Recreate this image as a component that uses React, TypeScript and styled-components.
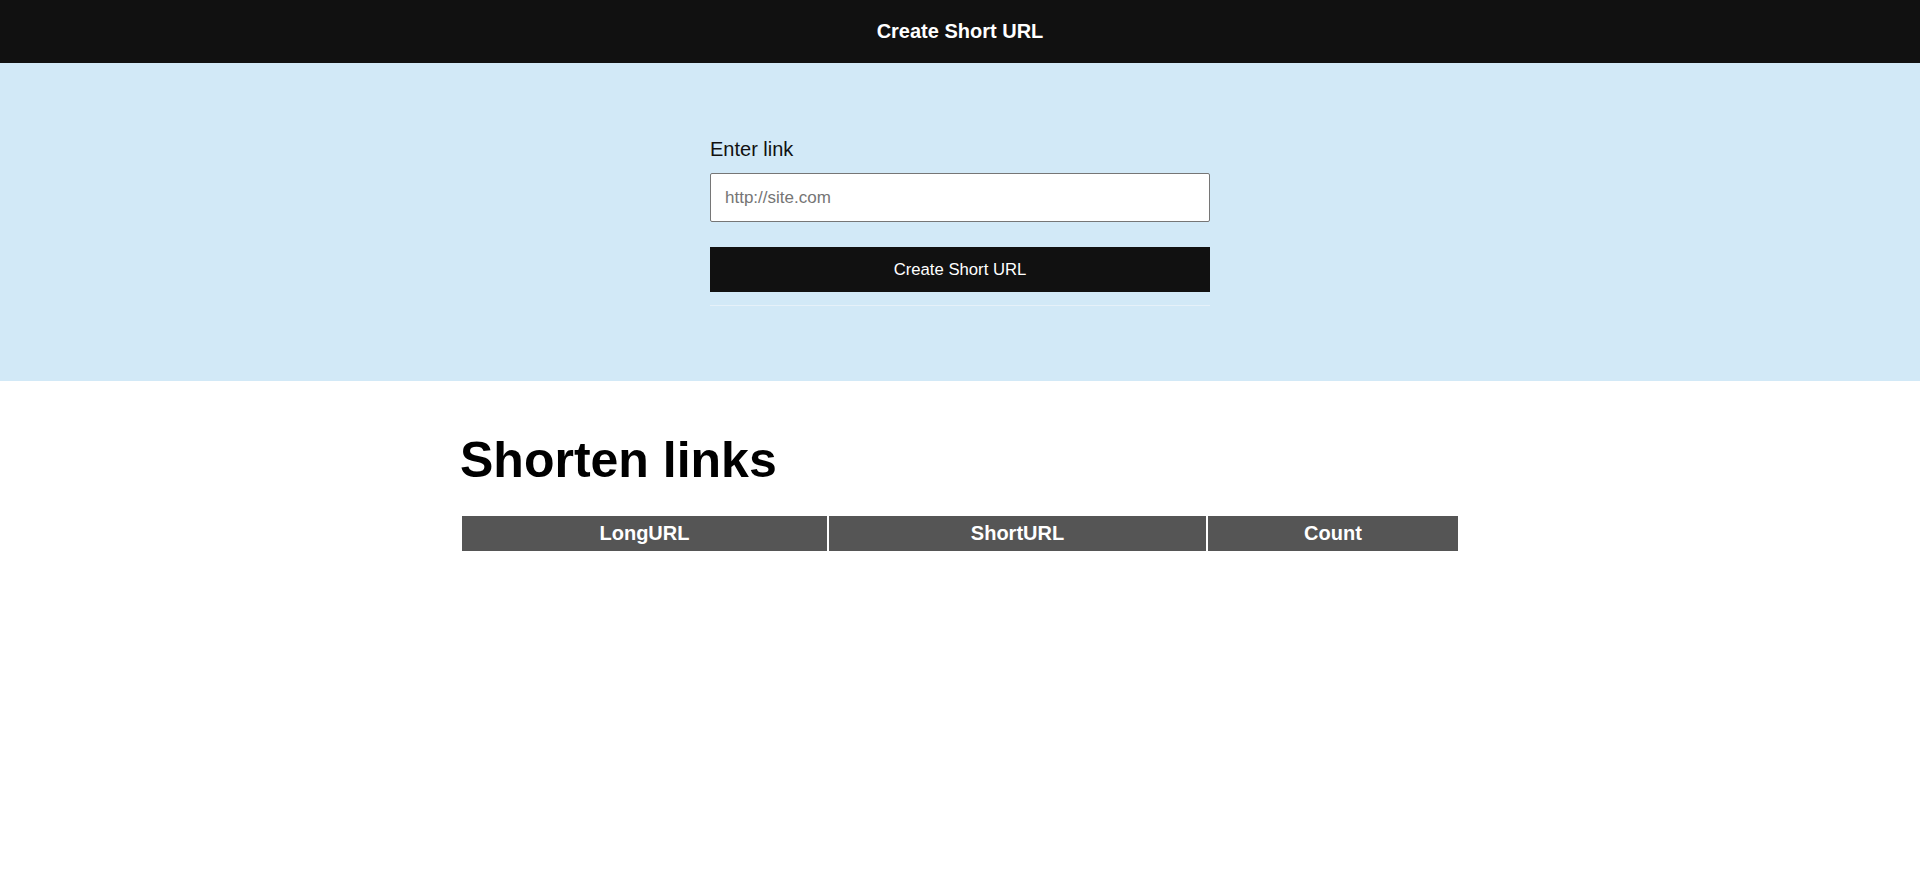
import React from "react";
import styled, { createGlobalStyle } from "styled-components";

const GlobalStyle = createGlobalStyle`
  html, body {
    margin: 0;
    padding: 0;
    background: #ffffff;
    font-family: "Liberation Sans", Arial, sans-serif;
    color: #000;
  }
  * { box-sizing: border-box; }
`;

const TopBar = styled.header`
  height: 63px;
  background: #111111;
  display: flex;
  align-items: center;
  justify-content: center;
`;

const TopTitle = styled.h3`
  margin: 0;
  font-size: 20px;
  font-weight: 700;
  color: #ffffff;
`;

const Hero = styled.section`
  height: 318px;
  background: #d2e9f7;
  display: flex;
  justify-content: center;
  padding-top: 75px;
`;

const Form = styled.form`
  width: 500px;
  display: flex;
  flex-direction: column;
`;

const Label = styled.label`
  font-size: 20px;
  line-height: 23px;
  color: #111;
`;

const Input = styled.input`
  margin-top: 12px;
  height: 49px;
  width: 100%;
  border: 1px solid #767676;
  border-radius: 2px;
  padding: 0 14px;
  font-family: "Liberation Sans", Arial, sans-serif;
  font-size: 17px;
  background: #fff;
  outline: none;
  &::placeholder {
    color: #757575;
  }
`;

const SubmitButton = styled.button`
  margin-top: 25px;
  height: 45px;
  width: 100%;
  border: none;
  background: #111111;
  color: #ffffff;
  font-family: "Liberation Sans", Arial, sans-serif;
  font-size: 16.7px;
  cursor: pointer;
`;

const Divider = styled.hr`
  margin: 13px 0 0;
  border: none;
  height: 1px;
  background: #e6f1f9;
`;

const Main = styled.main`
  width: 1000px;
  margin: 0 auto;
  padding-top: 51px;
`;

const Heading = styled.h1`
  margin: 0;
  font-size: 50px;
  font-weight: 700;
  line-height: 57px;
`;

const Table = styled.table`
  margin-top: 25px;
  width: 1000px;
  table-layout: fixed;
  border-spacing: 2px;
`;

const Th = styled.th<{ $w: number }>`
  width: ${(p) => p.$w}px;
  height: 35px;
  padding: 0;
  background: #555555;
  color: #ffffff;
  font-size: 20px;
  font-weight: 700;
  text-align: center;
`;

export default function App() {
  return (
    <>
      <GlobalStyle />
      <TopBar>
        <TopTitle>Create Short URL</TopTitle>
      </TopBar>
      <Hero>
        <Form onSubmit={(e) => e.preventDefault()}>
          <Label htmlFor="link">Enter link</Label>
          <Input id="link" type="text" placeholder="http://site.com" />
          <SubmitButton type="submit">Create Short URL</SubmitButton>
          <Divider />
        </Form>
      </Hero>
      <Main>
        <Heading>Shorten links</Heading>
        <Table>
          <thead>
            <tr>
              <Th $w={365}>LongURL</Th>
              <Th $w={377}>ShortURL</Th>
              <Th $w={250}>Count</Th>
            </tr>
          </thead>
        </Table>
      </Main>
    </>
  );
}
